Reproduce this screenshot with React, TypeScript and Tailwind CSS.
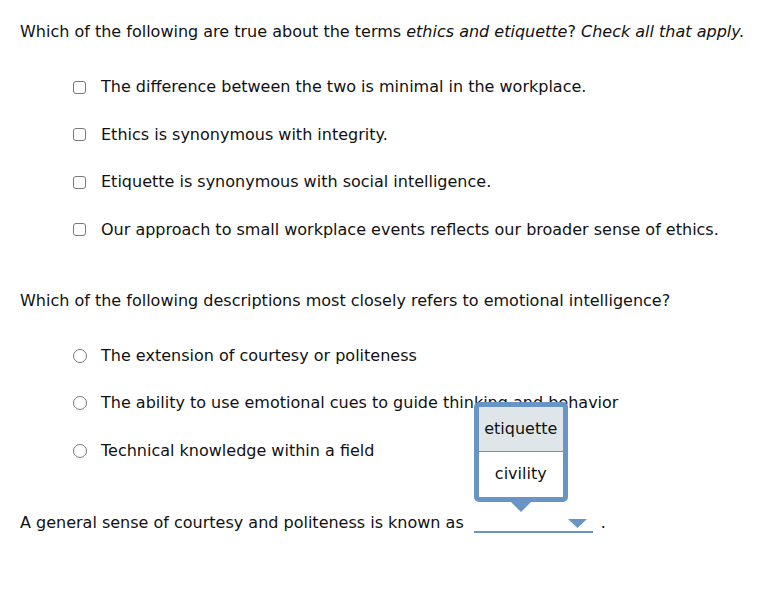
const checkOptions = [
  "The difference between the two is minimal in the workplace.",
  "Ethics is synonymous with integrity.",
  "Etiquette is synonymous with social intelligence.",
  "Our approach to small workplace events reflects our broader sense of ethics.",
];

const radioOptions = [
  "The extension of courtesy or politeness",
  "The ability to use emotional cues to guide thinking and behavior",
  "Technical knowledge within a field",
];

const Checkbox = () => (
  <span className="inline-block w-[13px] h-[13px] shrink-0 rounded-[3px] border border-[#7a7a7a] bg-white" />
);

const Radio = () => (
  <span className="inline-block w-[14px] h-[14px] shrink-0 rounded-full border border-[#7a7a7a] bg-white" />
);

const Dropdown = () => (
  <span className="relative inline-block align-[-5px] w-[119px] h-[16px] border-b-2 border-[#6894c6] ml-[10px] mr-[8px]">
    {/* arrow */}
    <svg className="absolute right-[6px] top-[2px]" width="19" height="9" viewBox="0 0 19 9">
      <polygon points="0,0 19,0 9.5,9" fill="#6894c6" />
    </svg>

    {/* open menu */}
    <div className="absolute left-0 bottom-[29px] w-[94px]">
      <div className="rounded-[5px] border-[5px] border-[#6894c6] bg-white overflow-hidden">
        <div className="h-[45px] flex items-center justify-center bg-[#dfe6e9] border-b border-[#6894c6]">
          etiquette
        </div>
        <div className="h-[45px] flex items-center justify-center bg-white">civility</div>
      </div>
      <svg className="absolute left-[37px] top-full" width="20" height="10" viewBox="0 0 20 10">
        <polygon points="0,0 20,0 10,10" fill="#6894c6" />
      </svg>
    </div>
  </span>
);

export default function App() {
  return (
    <div
      className="min-h-screen bg-white text-[#111] text-[16px] leading-[20px] px-5 pt-[22px]"
      style={{ fontFamily: '"DejaVu Sans", Verdana, sans-serif' }}
    >
      {/* Question 1 */}
      <p>
        Which of the following are true about the terms <em>ethics and etiquette</em>?{" "}
        <em>Check all that apply.</em>
      </p>
      <div className="mt-[35px] ml-[53px] flex flex-col gap-[27.5px]">
        {checkOptions.map((o) => (
          <div key={o} className="flex items-center gap-[15px]">
            <Checkbox />
            <span>{o}</span>
          </div>
        ))}
      </div>

      {/* Question 2 */}
      <p className="mt-[51px]">
        Which of the following descriptions most closely refers to emotional intelligence?
      </p>
      <div className="mt-[35px] ml-[53px] flex flex-col gap-[27.5px]">
        {radioOptions.map((o) => (
          <div key={o} className="flex items-center gap-[14px]">
            <Radio />
            <span>{o}</span>
          </div>
        ))}
      </div>

      {/* Question 3 */}
      <p className="mt-[52px]">
        A general sense of courtesy and politeness is known as
        <Dropdown />.
      </p>
    </div>
  );
}
